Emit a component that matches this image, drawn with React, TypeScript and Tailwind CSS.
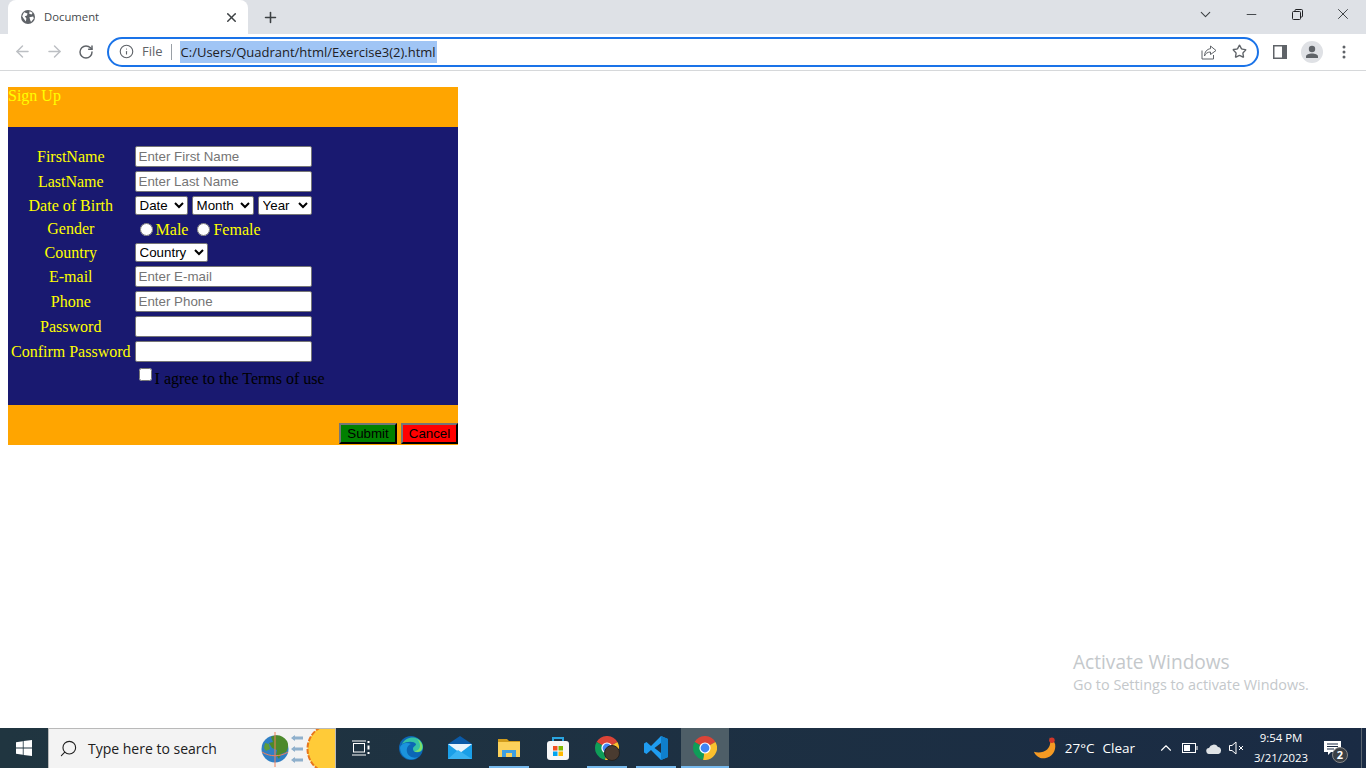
import { ArrowLeft, ArrowRight, ChevronDown, ChevronUp, Info, Minus, Plus, RotateCw, Search, Star, X } from 'lucide-react'

const serif = "font-['Liberation_Serif',serif]"
const arial = "font-['Liberation_Sans',sans-serif]"

function Globe() {
  return (
    <svg width="14" height="14" viewBox="0 0 14 14">
      <circle cx="7" cy="7" r="7" fill="#5f6368" />
      <path d="M3 2.2 6.5 3.4 6 5.6 3.8 6.2 5.4 8.6 4.8 11.4 2.6 8.4 1.2 6.2ZM8.6 1.2l3 1.6-1 1.6-2.4-.6ZM8.4 7.2l3.8-.6.6 2-2.8 3.4-.8-2Z" fill="#fff" />
    </svg>
  )
}

function ChromeLogo({ size = 24 }: { size?: number }) {
  return (
    <svg width={size} height={size} viewBox="0 0 24 24">
      <path d="M12 12 1.6 6A12 12 0 0 1 22.4 6Z" fill="#db4437" />
      <path d="M12 12 22.4 6A12 12 0 0 1 10 23.8Z" fill="#fbc02d" />
      <path d="M12 12 10 23.8A12 12 0 0 1 1.6 6Z" fill="#0f9d58" />
      <circle cx="12" cy="12" r="5.6" fill="#fff" />
      <circle cx="12" cy="12" r="4.4" fill="#4285f4" />
    </svg>
  )
}

function WindowsLogo() {
  return (
    <svg width="16" height="16" viewBox="0 0 16 16" fill="#fff">
      <path d="M0 2.2 6.8 1.2V7.5H0ZM7.6 1.1 16 0V7.5H7.6ZM0 8.4H6.8V14.8L0 13.8ZM7.6 8.4H16V16L7.6 14.9Z" />
    </svg>
  )
}

function NewsWidget() {
  return (
    <svg width="74" height="40" viewBox="0 0 74 40" className="shrink-0">
      <circle cx="14" cy="20" r="13.5" fill="#2f7fc4" />
      <path d="M10 8c5-3 12-2 16 4 2 4 1 8-1 11l-5 2-2 5-3-4 1-5-5-2-3-5 4-1Z" fill="#4d8a2c" />
      <path d="M4 14l4 1 1 5-4 2-2-3Z" fill="#5f9c38" />
      <path d="M14 3v35" stroke="#f2805a" strokeWidth="1" />
      <path d="M1 23c8 5 18 5 26 0" stroke="#f2805a" strokeWidth="1" fill="none" />
      <path d="M32 9h10M32 20h10M32 31h10" stroke="#8fb0cc" strokeWidth="3" />
      <path d="M34 6l-4 3 4 3M34 17l-4 3 4 3M34 28l-4 3 4 3" fill="#8fb0cc" />
      <circle cx="71" cy="20" r="24.500" fill="#ffcb38" />
      <circle cx="71" cy="20" r="24.500" fill="none" stroke="#e8761c" strokeWidth="2" strokeDasharray="5 1.500" />
    </svg>
  )
}

function TaskView() {
  return (
    <svg width="18" height="16" viewBox="0 0 18 16" fill="none" stroke="#fff" strokeWidth="1">
      <rect x="1.5" y="3.5" width="11" height="8.5" />
      <path d="M0 1h14M0 15h14" />
      <path d="M16.5 1v2M16.5 5.5v4M16.5 12v2" strokeWidth="2" />
    </svg>
  )
}

function EdgeLogo() {
  return (
    <svg width="24" height="24" viewBox="0 0 24 24">
      <circle cx="12" cy="12" r="12" fill="#0c66b5" />
      <path d="M3 8C6 1 18-2 23 7c2 4 1 8-3 9-4 1-6-1-6-3 0-3 3-3 3-5-2-3-9-3-14 0Z" fill="#35c1a5" />
      <path d="M18 3c4 2 6 6 5 10-1 3-5 4-8 2 3 0 6-2 6-5 0-3-1-5-3-7Z" fill="#7ce06a" />
      <path d="M1 12c1-5 7-6 11-4-3 1-5 4-4 8 1 4 6 7 11 5-6 5-17 2-18-9Z" fill="#1b93dd" />
    </svg>
  )
}

function MailLogo() {
  return (
    <svg width="24" height="24" viewBox="0 0 24 24">
      <path d="M0 8 12 0 24 8V10H0Z" fill="#0a5aa8" />
      <path d="M0 8H24V23H0Z" fill="#1a9fe8" />
      <path d="M0 8H24L12 17Z" fill="#e8f4fc" />
      <path d="M0 23 10 14 24 23Z" fill="#39b3f2" />
    </svg>
  )
}

function FolderLogo() {
  return (
    <svg width="22" height="20" viewBox="0 0 22 20">
      <path d="M0 1H9L11 3H22V6H0Z" fill="#d19c1c" />
      <path d="M0 4H22V19H0Z" fill="#fbd15b" />
      <path d="M4 19V12H18V19H14V15H8V19Z" fill="#3f9fe0" />
    </svg>
  )
}

function StoreLogo() {
  return (
    <svg width="24" height="24" viewBox="0 0 24 24">
      <path d="M7 6V2H17V6" fill="none" stroke="#2aa5e0" strokeWidth="2" />
      <rect x="1" y="5" width="22" height="19" rx="3" fill="#f7f7f7" />
      <rect x="7" y="10" width="4.5" height="4.5" fill="#f25022" />
      <rect x="12.5" y="10" width="4.5" height="4.5" fill="#7fba00" />
      <rect x="7" y="15.5" width="4.5" height="4.5" fill="#00a4ef" />
      <rect x="12.5" y="15.5" width="4.5" height="4.5" fill="#ffb900" />
    </svg>
  )
}

function CodeLogo() {
  return (
    <svg width="24" height="24" viewBox="0 0 24 24">
      <path d="M17 0 24 3V21L17 24 7 14 2.500 18 0 16.500V7.500L2.500 6 7 10Z M17 7 10.500 12 17 17Z" fill="#1f9cf0" fillRule="evenodd" />
      <path d="M17 0 24 3V21L17 24Z M17 7V17" fill="#0f7fcc" />
    </svg>
  )
}

function MoonLogo() {
  return (
    <svg width="24" height="24" viewBox="0 0 26 26">
      <path d="M18 2c2 6 0 13-7 15-3 1-7 1-10 0 2 5 7 8 12 7 8-1 12-8 11-15-1-3-3-6-6-7Z" fill="#f59a23" />
      <circle cx="20.500" cy="4.500" r="3" fill="#d0362a" />
    </svg>
  )
}

function TaskIcon({ children, line = false, active = false }: { children: React.ReactNode; line?: boolean; active?: boolean }) {
  return (
    <div className={`relative h-full flex items-center justify-center ${active ? 'w-[48px] ml-px bg-[#4e5e67]' : 'w-[49px]'}`}>
      {children}
      {line && <span className={`absolute bottom-0 h-[2px] bg-[#76b9ed] ${active ? 'inset-x-0' : 'left-[5px] right-[4px]'}`} />}
    </div>
  )
}

function Row({ label, children }: { label: string; children: React.ReactNode }) {
  return (
    <tr>
      <td className="p-px text-center text-[#ffff00]">{label}</td>
      <td className="p-px">{children}</td>
    </tr>
  )
}

function Field({ type = 'text', placeholder }: { type?: string; placeholder?: string }) {
  return (
    <input
      type={type}
      placeholder={placeholder}
      className={`block w-[177px] h-[21px] px-[3px] bg-white border border-[#767676] rounded-[2px] text-[13.33px] placeholder:text-[#757575] ${arial}`}
    />
  )
}

function Drop({ label, width }: { label: string; width: string }) {
  return (
    <select className={`${width} h-[19px] bg-white text-black border border-[#767676] rounded-[2px] text-[13.33px] ${arial}`}>
      <option>{label}</option>
    </select>
  )
}

export default function App() {
  return (
    <div className="w-[1366px] h-[768px] flex flex-col overflow-hidden bg-white">
      {/* browser tabs */}
      <div className="h-[34px] shrink-0 bg-[#dee1e6] flex">
        <div className="ml-[8px] w-[240px] h-full bg-white rounded-t-[8px] flex items-center pl-[13px] pr-[9px] text-[11.300px] text-[#45494d] font-['Open_Sans',sans-serif]">
          <Globe />
          <span className="ml-[9px] flex-1">Document</span>
          <X size={15} strokeWidth={2.4} className="text-[#3c4043]" />
        </div>
        <div className="w-[44px] flex items-center justify-center">
          <Plus size={17} strokeWidth={2.2} className="text-[#3c4043]" />
        </div>
        <div className="ml-auto flex h-[28px] text-[#3c4043]">
          <div className="w-[46px] flex items-center justify-center"><ChevronDown size={17} strokeWidth={1.5} /></div>
          <div className="w-[46px] flex items-center justify-center"><Minus size={15} strokeWidth={1.5} /></div>
          <div className="w-[46px] flex items-center justify-center">
            <svg width="11" height="11" viewBox="0 0 11 11" fill="none" stroke="#202124">
              <rect x="0.500" y="2.500" width="8" height="8" rx="1" />
              <path d="M3 2.500V1.500A1 1 0 0 1 4 .5H9.500A1 1 0 0 1 10.500 1.500V7A1 1 0 0 1 9.500 8H8.500" />
            </svg>
          </div>
          <div className="w-[46px] flex items-center justify-center"><X size={18} strokeWidth={1.3} /></div>
        </div>
      </div>

      {/* toolbar */}
      <div className="h-[37px] shrink-0 bg-white border-b border-[#d6d8da] flex items-center pb-[1px] pl-[6px] pr-[6px]">
        <div className="w-[32px] flex justify-center text-[#bcbfc3]"><ArrowLeft size={19} strokeWidth={1.8} /></div>
        <div className="w-[32px] flex justify-center text-[#bcbfc3]"><ArrowRight size={19} strokeWidth={1.8} /></div>
        <div className="w-[32px] flex justify-center text-[#5f6368]"><RotateCw size={16} strokeWidth={2.2} /></div>
        <div className="ml-[5px] w-[1152px] h-[30px] rounded-full border-2 border-[#1a73e8] flex items-center pl-[10px] pr-[10px] font-['Open_Sans',sans-serif]">
          <Info size={15} strokeWidth={1.8} className="text-[#5f6368] shrink-0" />
          <span className="ml-[8px] text-[#5f6368] text-[13px]">File</span>
          <span className="ml-[8px] w-px h-[16px] bg-[#9aa0a6]" />
          <span className="ml-[8px] h-[22px] pt-px leading-[21px] px-px bg-[#a0c5f5] text-[#202124] text-[13px]">C:/Users/Quadrant/html/Exercise3(2).html</span>
          <svg className="ml-auto" width="16" height="16" viewBox="0 0 16 16" fill="none" stroke="#5f6368" strokeWidth="1">
            <path d="M1 6.500V15H12.500V11" />
            <path d="M9.500 2 15 6.500 9.500 10.500V8C6.500 8 4.500 9.500 3.500 12 3.500 8 6 5 9.500 4.700Z" />
          </svg>
          <Star size={15} strokeWidth={2.2} className="ml-[15px] text-[#5f6368]" />
        </div>
        <div className="ml-[5px] w-[32px] flex justify-center">
          <svg width="14" height="14" viewBox="0 0 14 14">
            <rect width="14" height="14" fill="#5f6368" />
            <rect x="1.500" y="1.500" width="7.500" height="11" fill="#fff" />
          </svg>
        </div>
        <div className="w-[32px] flex justify-center">
          <div className="w-[22px] h-[22px] rounded-full bg-[#dfe1e5] flex items-center justify-center">
            <svg width="14" height="14" viewBox="0 0 14 14" fill="#5f6368">
              <circle cx="7" cy="4" r="3.200" />
              <path d="M1 13V11.500C1 9.500 4 8.500 7 8.500S13 9.500 13 11.500V13Z" />
            </svg>
          </div>
        </div>
        <div className="w-[32px] flex justify-center">
          <svg width="4" height="14" viewBox="0 0 4 14" fill="#5f6368">
            <circle cx="2" cy="2" r="1.500" />
            <circle cx="2" cy="7" r="1.500" />
            <circle cx="2" cy="12" r="1.500" />
          </svg>
        </div>
      </div>

      {/* page */}
      <main className={`relative flex-1 px-[8px] pt-[16px] text-[16px] leading-[18px] ${serif}`}>
        <div className="w-[450px]">
          <div className="h-[40px] bg-[#ffa500] text-[#ffff00]">Sign Up</div>
          <div className="h-[278px] bg-[#191970] pt-[16px]">
            <table className="border-separate border-spacing-[2px]">
              <tbody>
                <Row label="FirstName"><Field placeholder="Enter First Name" /></Row>
                <Row label="LastName"><Field placeholder="Enter Last Name" /></Row>
                <Row label="Date of Birth">
                  <div className="flex gap-[4px]">
                    <Drop label="Date" width="w-[53px]" />
                    <Drop label="Month" width="w-[62px]" />
                    <Drop label="Year" width="w-[54px]" />
                  </div>
                </Row>
                <Row label="Gender">
                  <div className="h-[20px] pt-px flex items-center text-[#ffff00]">
                    <input type="radio" name="gender" className="w-[13px] h-[13px] ml-[5px] mr-[3px]" />
                    <span>Male</span>
                    <input type="radio" name="gender" className="w-[13px] h-[13px] ml-[9px] mr-[3px]" />
                    <span>Female</span>
                  </div>
                </Row>
                <Row label="Country"><Drop label="Country" width="w-[73px] block" /></Row>
                <Row label="E-mail"><Field placeholder="Enter E-mail" /></Row>
                <Row label="Phone"><Field placeholder="Enter Phone" /></Row>
                <Row label="Password"><Field type="password" /></Row>
                <Row label="Confirm Password"><Field type="password" /></Row>
                <tr>
                  <td className="p-px" />
                  <td className="px-px pt-[3px] whitespace-nowrap text-black">
                    <input type="checkbox" className="w-[13px] h-[13px] ml-[4px] mr-[3px] align-[3px]" />
                    I agree to the Terms of use
                  </td>
                </tr>
              </tbody>
            </table>
          </div>
          <div className={`h-[40px] bg-[#ffa500] flex justify-end items-end gap-[4px] pb-px text-[13.33px] text-black ${arial}`}>
            <button className="h-[21px] w-[58px] bg-[#008000] border-2 border-t-[#767676] border-l-[#767676] border-r-black border-b-black">Submit</button>
            <button className="h-[21px] w-[57px] bg-[#ff0000] border-2 border-t-[#767676] border-l-[#767676] border-r-black border-b-black">Cancel</button>
          </div>
        </div>

        <div className="absolute left-[1073px] top-[579px] text-[#c4c8cb] font-['Open_Sans',sans-serif]">
          <div className="text-[19.100px] leading-[25px]">Activate Windows</div>
          <div className="text-[14.400px] leading-[20px]">Go to Settings to activate Windows.</div>
        </div>
      </main>

      {/* windows taskbar */}
      <footer className="h-[40px] shrink-0 flex items-center bg-gradient-to-r from-[#203540] to-[#1a2b44] text-white font-['Open_Sans',sans-serif]">
        <div className="w-[48px] flex justify-center"><WindowsLogo /></div>
        <div className="w-[288px] h-full bg-[#f3f3f3] border border-[#b9b9b9] border-b-0 flex items-center overflow-hidden text-[#202020] text-[14px]">
          <Search size={19} strokeWidth={1.4} className="ml-[10px] -scale-x-100" />
          <span className="ml-[10px] flex-1">Type here to search</span>
          <NewsWidget />
        </div>
        <div className="flex h-full">
          <TaskIcon><TaskView /></TaskIcon>
          <div className="flex h-full ml-px">
            <TaskIcon><EdgeLogo /></TaskIcon>
            <TaskIcon><MailLogo /></TaskIcon>
            <TaskIcon line><FolderLogo /></TaskIcon>
            <TaskIcon><StoreLogo /></TaskIcon>
            <TaskIcon line>
              <ChromeLogo />
              <span className="absolute left-[22px] top-[17px] w-[16px] h-[16px] rounded-full bg-[#4a3b30] border border-[#222]" />
            </TaskIcon>
            <TaskIcon line><CodeLogo /></TaskIcon>
            <TaskIcon line active><ChromeLogo /></TaskIcon>
          </div>
        </div>
        <div className="ml-auto flex items-center h-full text-[13.500px]">
          <MoonLogo />
          <span className="ml-[8px]">27°C</span>
          <span className="ml-[8px]">Clear</span>
          <ChevronUp size={18} strokeWidth={1.5} className="ml-[22px]" />
          <svg className="ml-[7px]" width="16" height="10" viewBox="0 0 16 10" fill="none" stroke="#fff">
            <rect x="0.500" y="0.500" width="13" height="9" />
            <rect x="2" y="2" width="6" height="6" fill="#fff" stroke="none" />
            <path d="M15 3V7" />
          </svg>
          <svg className="ml-[8px]" width="16" height="11" viewBox="0 0 16 11" fill="#dfe3e6">
            <path d="M3.500 11A3 3 0 0 1 3 5 5 5 0 0 1 12 4 3.600 3.600 0 0 1 12.500 11Z" />
          </svg>
          <svg className="ml-[7px]" width="16" height="14" viewBox="0 0 16 14" fill="none" stroke="#fff">
            <path d="M.5 4.500H3L7 1V13L3 9.500H.5Z" />
            <path d="M10 5 14 9M14 5 10 9" />
          </svg>
          <div className="ml-[5px] w-[62px] text-center text-[11.400px] leading-[20px]">
            <div>9:54 PM</div>
            <div>3/21/2023</div>
          </div>
          <div className="relative ml-[12px] mr-[19px] w-[18px]">
            <svg width="17" height="15" viewBox="0 0 17 15" fill="#fff">
              <path d="M0 0H17V11H7L4 14V11H0Z" />
              <path d="M3 3H14M3 5.500H14M3 8H10" stroke="#1a2b44" />
            </svg>
            <span className="absolute left-[8px] top-[6px] w-[16px] h-[16px] rounded-full bg-[#3a3f45] border border-[#888] text-[11px] leading-[14px] text-center font-bold">2</span>
          </div>
          <div className="w-px h-full bg-[#5a6570] mr-[4px]" />
        </div>
      </footer>
    </div>
  )
}
